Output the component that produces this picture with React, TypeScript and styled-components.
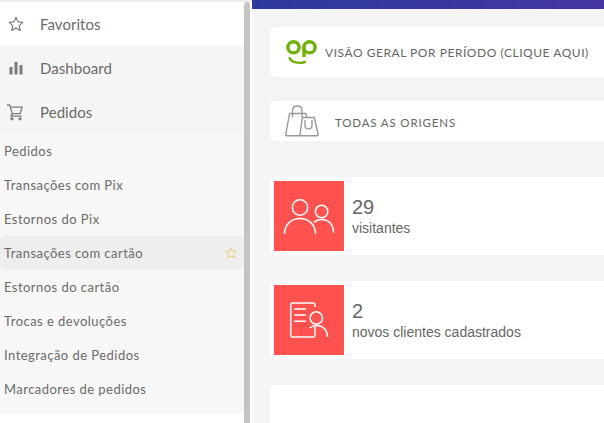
import React from "react";
import styled, { createGlobalStyle } from "styled-components";

const Global = createGlobalStyle`
  html, body { margin: 0; padding: 0; background: #f4f4f4; }
  * { box-sizing: border-box; }
  #root { width: 604px; height: 423px; overflow: hidden; }
`;

const Page = styled.div`
  display: flex;
  width: 604px;
  height: 423px;
  overflow: hidden;
  background: #f4f4f4;
`;

const Sidebar = styled.aside`
  flex: 0 0 252px;
  height: 423px;
  display: flex;
  flex-direction: column;
  background: #ebebeb;
  padding-top: 2px;
  overflow: hidden;
`;

const SidebarBody = styled.div`
  flex: 1;
  display: flex;
  background: #fff;
  padding-right: 2px;
`;

const Menu = styled.nav`
  width: 244px;
  display: flex;
  flex-direction: column;
  background: #fff;
  font-family: "Lato", "Noto Sans", sans-serif;
  color: #6b6b6b;
`;

const Scrollbar = styled.div`
  width: 6px;
  background: #c4c4c4;
  border-radius: 3px 3px 0 0;
`;

const TopItem = styled.div<{ $active?: boolean }>`
  height: 44px;
  display: flex;
  align-items: center;
  padding-left: 7px;
  gap: 15px;
  font-size: 15px;
  letter-spacing: 0.05px;
  background: ${(p) => (p.$active ? "#fff" : "#f5f5f5")};
`;

const IconSlot = styled.span`
  width: 18px;
  height: 18px;
  display: flex;
  align-items: center;
  justify-content: center;
  color: #7c7c7c;
`;

const SubMenu = styled.div`
  display: flex;
  flex-direction: column;
  background: #f7f7f7;
  padding-bottom: 8px;
`;

const SubItem = styled.div<{ $active?: boolean }>`
  height: 34px;
  display: flex;
  align-items: center;
  justify-content: space-between;
  padding: 0 6px 0 4px;
  font-size: 13px;
  letter-spacing: 0.46px;
  border-radius: 6px;
  background: ${(p) => (p.$active ? "#eeeeee" : "transparent")};
`;

const Main = styled.main`
  flex: 1;
  min-width: 0;
  display: flex;
  flex-direction: column;
`;

const TopBar = styled.div`
  height: 9px;
  flex: none;
  background: linear-gradient(90deg, #2c3b9b, #4535a0);
`;

const Content = styled.div`
  padding: 18px 0 0 18px;
  display: flex;
  flex-direction: column;
`;

const Card = styled.section<{ $h: number; $mt?: number }>`
  height: ${(p) => p.$h}px;
  margin-top: ${(p) => p.$mt ?? 0}px;
  margin-right: -10px;
  flex: none;
  background: #fff;
  border-radius: 5px;
  display: flex;
  align-items: center;
`;

const HeaderTitle = styled.span<{ $size: number; $ml: number; $ls: number; $mt?: number }>`
  font-family: "Lato", "Open Sans", sans-serif;
  font-size: ${(p) => p.$size}px;
  letter-spacing: ${(p) => p.$ls}px;
  color: #666;
  margin-left: ${(p) => p.$ml}px;
  margin-top: ${(p) => p.$mt ?? 0}px;
  white-space: nowrap;
`;

const RedBox = styled.div`
  width: 70px;
  height: 70px;
  margin-left: 4px;
  flex: none;
  background: #ff524f;
  display: flex;
  align-items: center;
  justify-content: center;
`;

const Stat = styled.div`
  margin-left: 8px;
  display: flex;
  flex-direction: column;
  font-family: "Liberation Sans", Arial, sans-serif;
  color: #666;
`;

const StatValue = styled.div`
  font-size: 20px;
  line-height: 21px;
  margin-bottom: 2px;
`;

const StatLabel = styled.div`
  font-size: 14px;
  line-height: 16px;
`;

const StarIcon = ({ color = "currentColor", size = 18 }: { color?: string; size?: number }) => (
  <svg width={size} height={size} viewBox="0 0 24 24" fill="none" stroke={color} strokeWidth="1.6" strokeLinejoin="round">
    <path d="M12 3.2l2.7 5.9 6.4.7-4.8 4.3 1.4 6.4L12 17.2l-5.7 3.3 1.4-6.4-4.8-4.3 6.4-.7z" />
  </svg>
);

const BarsIcon = () => (
  <svg width="14" height="14" viewBox="0 0 14 14" fill="currentColor">
    <rect x="0.5" y="6" width="3" height="7.5" />
    <rect x="5.5" y="1" width="3" height="12.5" />
    <rect x="10.5" y="4" width="3" height="9.5" />
  </svg>
);

const CartIcon = () => (
  <svg width="18" height="18" viewBox="0 0 18 18" fill="none" stroke="currentColor" strokeWidth="1.3" style={{ marginLeft: -3 }}>
    <path d="M1 2h2.6l2.6 8.6h8l1.9-6.4H4.4" strokeLinejoin="round" />
    <path d="M6.2 10.6l-1.4 2.6h11" strokeLinejoin="round" />
    <circle cx="6" cy="15.8" r="1" fill="currentColor" />
    <circle cx="14" cy="15.8" r="1" fill="currentColor" />
  </svg>
);

const OpLogo = () => (
  <svg width="32" height="38" viewBox="0 0 32 38" fill="none" stroke="#6fb009" style={{ marginLeft: 16, flex: "none" }}>
    <circle cx="7.5" cy="14.3" r="5.6" strokeWidth="3.4" />
    <circle cx="23.5" cy="14.3" r="5.6" strokeWidth="3.4" />
    <path d="M18 14.3V24" strokeWidth="3.4" />
    <path d="M3.500 25C5.500 29.500 13 31 19 29" strokeWidth="2.4" strokeLinecap="round" />
  </svg>
);

const BagsIcon = () => (
  <svg width="34" height="32" viewBox="0 0 34 32" fill="none" stroke="#999" strokeWidth="1.4" strokeLinejoin="round" style={{ marginLeft: 15, flex: "none" }}>
    <path d="M4.5 8.5H21l.6 3.5M15 30.7H1.800a1 1 0 0 1-1-1.200L4.500 8.500" />
    <path d="M7.500 12.500V5.500C7.500 2.800 9.500 1 12.300 1S17 2.800 17 5.500V12" />
    <path d="M17.300 12.500h12l3.800 17a1 1 0 0 1-1 1.200H16a1 1 0 0 1-1-1.200z" />
    <path d="M20 15v5.500c0 4.500 7 4.500 7 0V15" />
  </svg>
);

const PeopleIcon = () => (
  <svg width="52" height="38" viewBox="0 0 52 38" fill="none" stroke="#fff" strokeWidth="1.5" style={{ marginLeft: -1 }}>
    <circle cx="17" cy="10.5" r="7.7" />
    <path d="M1.500 37c0-9 6.500-15.500 15.500-15.500S32.500 28 32.500 37" />
    <circle cx="38.6" cy="14.5" r="6.2" />
    <path d="M31 25.500c2-2 4.500-3 7.500-3 7 0 12 5 12 13" />
  </svg>
);

const ClientIcon = () => (
  <svg width="40" height="36" viewBox="0 0 40 36" fill="none" stroke="#fff" strokeWidth="1.5" style={{ marginLeft: 2 }}>
    <path d="M25 5V2.500A1.500 1.500 0 0 0 23.500 1H2.200A1.500 1.500 0 0 0 .7 2.500v31A1.500 1.500 0 0 0 2.200 35h21.300a1.500 1.500 0 0 0 1.500-1.500V24" />
    <path d="M4 7h12M4 13h12M4 19.300h12" />
    <circle cx="26.3" cy="16" r="6.2" />
    <path d="M19.500 26c2-1.500 4.500-2.500 7.500-2.500 6 0 10.500 5 10.500 11.500" />
  </svg>
);

const subItems = [
  "Pedidos",
  "Transações com Pix",
  "Estornos do Pix",
  "Transações com cartão",
  "Estornos do cartão",
  "Trocas e devoluções",
  "Integração de Pedidos",
  "Marcadores de pedidos",
];

export default function App() {
  return (
    <Page>
      <Global />
      <Sidebar>
        <SidebarBody>
          <Menu>
            <TopItem $active>
              <IconSlot><StarIcon /></IconSlot>
              Favoritos
            </TopItem>
            <TopItem>
              <IconSlot><BarsIcon /></IconSlot>
              Dashboard
            </TopItem>
            <TopItem>
              <IconSlot><CartIcon /></IconSlot>
              Pedidos
            </TopItem>
            <SubMenu>
              {subItems.map((label) => {
                const active = label === "Transações com cartão";
                return (
                  <SubItem key={label} $active={active}>
                    {label}
                    {active && <StarIcon color="#eec86a" size={14} />}
                  </SubItem>
                );
              })}
            </SubMenu>
          </Menu>
          <Scrollbar />
        </SidebarBody>
      </Sidebar>
      <Main>
        <TopBar />
        <Content>
          <Card $h={50}>
            <OpLogo />
            <HeaderTitle $size={12} $ml={7} $ls={0.54}>VISÃO GERAL POR PERÍODO (CLIQUE AQUI)</HeaderTitle>
          </Card>
          <Card $h={40} $mt={24}>
            <BagsIcon />
            <HeaderTitle $size={11.5} $ml={16} $ls={0.85} $mt={2}>TODAS AS ORIGENS</HeaderTitle>
          </Card>
          <Card $h={78} $mt={36}>
            <RedBox><PeopleIcon /></RedBox>
            <Stat>
              <StatValue>29</StatValue>
              <StatLabel>visitantes</StatLabel>
            </Stat>
          </Card>
          <Card $h={78} $mt={26}>
            <RedBox><ClientIcon /></RedBox>
            <Stat>
              <StatValue>2</StatValue>
              <StatLabel>novos clientes cadastrados</StatLabel>
            </Stat>
          </Card>
          <Card $h={60} $mt={26} />
        </Content>
      </Main>
    </Page>
  );
}
